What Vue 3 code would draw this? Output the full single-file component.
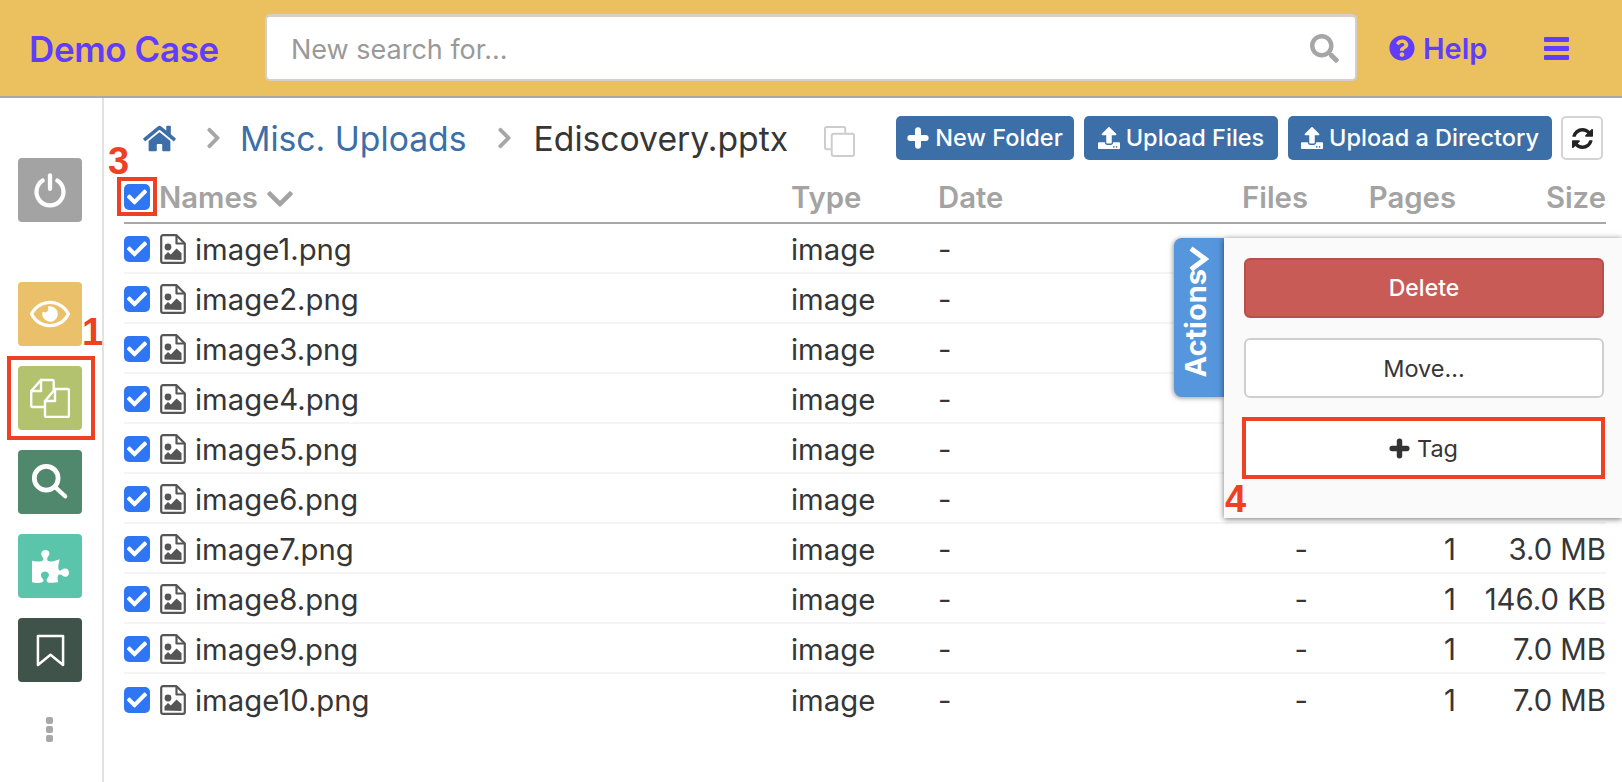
<script setup>
const names = ['image1.png','image2.png','image3.png','image4.png','image5.png','image6.png','image7.png','image8.png','image9.png','image10.png']
const sizes = ['', '', '', '', '', '', '3.0 MB', '146.0 KB', '7.0 MB', '7.0 MB']
const rows = names.map((name, i) => ({ name, size: sizes[i], files: sizes[i] ? '-' : '', pages: sizes[i] ? '1' : '' }))
const paths = {
  check: 'M173.898 439.404l-166.4-166.4c-9.997-9.997-9.997-26.206 0-36.204l36.203-36.204c9.997-9.998 26.207-9.998 36.204 0L192 312.69 432.095 72.596c9.997-9.997 26.207-9.997 36.204 0l36.203 36.204c9.997 9.997 9.997 26.206 0 36.204l-294.4 294.401c-9.998 9.997-26.207 9.997-36.204-.001z',
  search: 'M505 442.7L405.3 343c-4.5-4.5-10.6-7-17-7H372c27.6-35.3 44-79.7 44-128C416 93.1 322.9 0 208 0S0 93.1 0 208s93.1 208 208 208c48.3 0 92.7-16.4 128-44v16.3c0 6.4 2.5 12.5 7 17l99.7 99.7c9.4 9.4 24.6 9.4 33.9 0l28.3-28.3c9.4-9.4 9.4-24.6.1-34zM208 336c-70.7 0-128-57.2-128-128 0-70.7 57.2-128 128-128 70.7 0 128 57.2 128 128 0 70.7-57.2 128-128 128z',
  help: 'M504 256c0 136.997-111.043 248-248 248S8 392.997 8 256C8 119.083 119.043 8 256 8s248 111.083 248 248zM262.655 90c-54.497 0-89.255 22.957-116.549 63.758-3.536 5.286-2.353 12.415 2.715 16.258l34.699 26.31c5.205 3.947 12.621 3.008 16.665-2.122 17.864-22.658 30.113-35.797 57.303-35.797 20.429 0 45.698 13.148 45.698 32.958 0 14.976-12.363 22.667-32.534 33.976C247.128 238.528 216 254.941 216 296v4c0 6.627 5.373 12 12 12h56c6.627 0 12-5.373 12-12v-1.333c0-28.462 83.186-29.647 83.186-106.667 0-58.002-60.165-102-116.531-102zM256 338c-25.365 0-46 20.635-46 46 0 25.364 20.635 46 46 46s46-20.636 46-46c0-25.365-20.635-46-46-46z',
  home: 'M280.37 148.26L96 300.11V464a16 16 0 0 0 16 16l112.06-.29a16 16 0 0 0 15.92-16V368a16 16 0 0 1 16-16h64a16 16 0 0 1 16 16v95.64a16 16 0 0 0 16 16.05L464 480a16 16 0 0 0 16-16V300L295.67 148.26a12.19 12.19 0 0 0-15.3 0zM571.6 251.47L488 182.56V44.05a12 12 0 0 0-12-12h-56a12 12 0 0 0-12 12v72.61L318.47 43a48 48 0 0 0-61 0L4.34 251.47a12 12 0 0 0-1.6 16.9l25.5 31A12 12 0 0 0 45.15 301l235.22-193.74a12.19 12.19 0 0 1 15.3 0L530.9 301a12 12 0 0 0 16.9-1.6l25.5-31a12 12 0 0 0-1.7-16.93z',
  upload: 'M296 384h-80c-13.3 0-24-10.7-24-24V192h-87.7c-17.8 0-26.7-21.5-14.1-34.1L242.3 5.7c7.5-7.5 19.8-7.5 27.3 0l152.2 152.2c12.6 12.6 3.7 34.1-14.1 34.1H320v168c0 13.3-10.7 24-24 24zm216-8v112c0 13.3-10.7 24-24 24H24c-13.3 0-24-10.7-24-24V376c0-13.3 10.7-24 24-24h136v8c0 30.9 25.1 56 56 56h80c30.9 0 56-25.1 56-56v-8h136c13.3 0 24 10.7 24 24zm-124 88c0-11-9-20-20-20s-20 9-20 20 9 20 20 20 20-9 20-20zm64 0c0-11-9-20-20-20s-20 9-20 20 9 20 20 20 20-9 20-20z',
  refresh: 'M1511 928q0 5-1 7-64 268-268 434.5t-478 166.5q-146 0-282.5-55t-243.5-157l-129 129q-19 19-45 19t-45-19-19-45v-448q0-26 19-45t45-19h448q26 0 45 19t19 45-19 45l-137 137q71 66 161 102t187 36q134 0 250-65t186-179q11-17 53-117 8-23 30-23h192q13 0 22.5 9.5t9.5 22.5zm25-800v448q0 26-19 45t-45 19h-448q-26 0-45-19t-19-45 19-45l138-138q-148-137-349-137-134 0-250 65t-186 179q-11 17-53 117-8 23-30 23h-199q-13 0-22.5-9.5t-9.5-22.5v-7q65-268 270-434.5t480-166.5q146 0 284 55.5t245 156.5l130-129q19-19 45-19t45 19 19 45z',
  eye: 'M288 144a110.94 110.94 0 0 0-31.24 5 55.4 55.4 0 0 1 7.24 27 56 56 0 0 1-56 56 55.4 55.4 0 0 1-27-7.24A111.71 111.71 0 1 0 288 144zm284.52 97.4C518.29 135.59 410.93 64 288 64S57.68 135.64 3.48 241.41a32.35 32.35 0 0 0 0 29.19C57.71 376.41 165.07 448 288 448s230.32-71.64 284.52-177.41a32.35 32.35 0 0 0 0-29.19zM288 400c-98.65 0-189.09-55-237.93-144C98.91 167 189.34 112 288 112s189.09 55 237.93 144C477.1 345 386.66 400 288 400z',
  chevronDown: 'M207.029 381.476L12.686 187.132c-9.373-9.373-9.373-24.569 0-33.941l22.667-22.667c9.357-9.357 24.522-9.375 33.901-.04L224 284.505l154.745-154.021c9.379-9.335 24.544-9.317 33.901.04l22.667 22.667c9.373 9.373 9.373 24.569 0 33.941L240.971 381.476c-9.373 9.372-24.569 9.372-33.942 0z',
  chevronRight: 'M285.476 272.971L91.132 467.314c-9.373 9.373-24.569 9.373-33.941 0l-22.667-22.667c-9.357-9.357-9.375-24.522-.04-33.901L188.505 256 34.484 101.255c-9.335-9.379-9.317-24.544.04-33.901l22.667-22.667c9.373-9.373 24.569-9.373 33.941 0L285.475 239.03c9.373 9.372 9.373 24.568.001 33.941z',
  puzzle: 'M519.442 288.651c-41.519 0-59.5 31.593-82.058 31.593C377.409 320.244 432 144 432 144s-196.288 80-196.288-3.297c0-35.827 36.288-46.25 36.288-85.985C272 19.216 243.885 0 210.539 0c-34.654 0-66.366 18.891-66.366 56.346 0 41.364 31.711 59.277 31.711 81.75C175.885 207.719 0 166.758 0 166.758v333.237s178.635 41.047 178.635-28.662c0-22.473-40-40.107-40-81.471 0-37.456 29.25-56.346 63.577-56.346 33.673 0 61.788 19.216 61.788 54.717 0 39.735-36.288 50.158-36.288 85.985 0 60.803 129.675 25.73 181.23 25.73 0 0-34.725-120.101 25.827-120.101 35.962 0 46.423 36.152 86.308 36.152C556.712 416 576 387.99 576 354.443c0-34.199-18.962-65.792-56.558-65.792z'
}
</script>

<template>
  <div class="app">
    <header class="topbar">
      <div class="brand">Demo Case</div>
      <div class="search">
        <span class="placeholder">New search for...</span>
        <svg class="search-icon" viewBox="0 0 512 512"><path :d="paths.search" /></svg>
      </div>
      <div class="help">
        <svg class="help-icon" viewBox="0 0 512 512"><path :d="paths.help" /></svg>
        <span>Help</span>
      </div>
      <div class="bars"><i></i><i></i><i></i></div>
    </header>

    <div class="body">
      <aside class="sidebar">
        <div class="tile power">
          <svg viewBox="0 0 32 32" width="36" height="36" fill="none" stroke="#fff" stroke-width="3.8" stroke-linecap="round">
            <path d="M16 3v12" />
            <path d="M9.5 7.6a12 12 0 1 0 13 0" />
          </svg>
        </div>
        <div class="tile eye">
          <svg viewBox="0 0 576 512" width="40" height="36"><path :d="paths.eye" fill="#fff" /></svg>
        </div>
        <div class="tile files">
          <svg viewBox="0 0 40 40" width="40" height="40" fill="none" stroke="#fff" stroke-width="2.4" stroke-linejoin="round" stroke-linecap="round">
            <path d="M11 2H22.500a1.200 1.200 0 0 1 1.200 1.200V11" />
            <path d="M11 2L1.200 13V27.800A1.200 1.200 0 0 0 2.400 29H14" />
            <path d="M11 2v11H1.200" />
            <path d="M25 11h12.800a1.200 1.200 0 0 1 1.200 1.200v25.600a1.200 1.200 0 0 1-1.200 1.200H16.200a1.200 1.200 0 0 1-1.200-1.200V23z" />
            <path d="M25 11v12H15" />
          </svg>
        </div>
        <div class="tile find">
          <svg viewBox="0 0 40 40" width="38" height="38" fill="none" stroke="#fff" stroke-linecap="round">
            <circle cx="16" cy="16" r="12.500" stroke-width="5" />
            <path d="M26 26l10 9" stroke-width="4.500" />
          </svg>
        </div>
        <div class="tile puzzle">
          <svg viewBox="0 0 576 512" width="37" height="33"><path :d="paths.puzzle" fill="#fff" /></svg>
        </div>
        <div class="tile bookmark">
          <svg viewBox="0 0 30 34" width="29" height="33" fill="none" stroke="#fff" stroke-width="2.600" stroke-linejoin="round">
            <path d="M2 2h26v30L15 21.500 2 32z" />
          </svg>
        </div>
        <div class="dots"><i></i><i></i><i></i></div>
      </aside>

      <main class="main">
        <div class="toolbar">
          <nav class="crumbs">
            <svg class="home" viewBox="0 0 576 512"><path :d="paths.home" /></svg>
            <svg class="crumb-sep" viewBox="0 0 320 512"><path :d="paths.chevronRight" /></svg>
            <a class="crumb-link">Misc. Uploads</a>
            <svg class="crumb-sep" viewBox="0 0 320 512"><path :d="paths.chevronRight" /></svg>
            <span class="crumb-current">Ediscovery.pptx</span>
            <svg class="copy" viewBox="0 0 32 32" fill="none" stroke="#ccc" stroke-width="2">
              <path d="M7 24H3a2 2 0 0 1-2-2V3a2 2 0 0 1 2-2h17a2 2 0 0 1 2 2v4" />
              <rect x="8" y="8" width="23" height="23" rx="2" />
            </svg>
          </nav>
          <div class="actions">
            <button class="btn-blue w-folder">
              <svg viewBox="0 0 20 20" class="btn-plus"><path d="M10 3v14M3 10h14" /></svg><span>New Folder</span>
            </button>
            <button class="btn-blue w-files">
              <svg viewBox="0 0 512 512" class="btn-icon"><path :d="paths.upload" /></svg><span>Upload Files</span>
            </button>
            <button class="btn-blue w-dir">
              <svg viewBox="0 0 512 512" class="btn-icon"><path :d="paths.upload" /></svg><span>Upload a Directory</span>
            </button>
            <button class="btn-refresh">
              <svg viewBox="0 0 1536 1536"><path :d="paths.refresh" /></svg>
            </button>
          </div>
        </div>

        <div class="table-head grid">
          <div class="name-cell">
            <span class="check"><svg viewBox="0 0 512 512"><path :d="paths.check" /></svg></span>
            <span class="names">Names</span>
            <svg class="names-chev" viewBox="0 0 448 512"><path :d="paths.chevronDown" /></svg>
          </div>
          <div>Type</div>
          <div>Date</div>
          <div class="right">Files</div>
          <div class="right">Pages</div>
          <div class="right">Size</div>
        </div>

        <div v-for="row in rows" :key="row.name" class="row grid">
          <div class="name-cell">
            <span class="check"><svg viewBox="0 0 512 512"><path :d="paths.check" /></svg></span>
            <svg class="file-icon" viewBox="0 0 26 30">
              <path class="file-line" d="M3 1.200h13.500l8.300 8.300V27a1.800 1.800 0 0 1-1.800 1.800H3A1.800 1.800 0 0 1 1.200 27V3A1.800 1.800 0 0 1 3 1.200z" />
              <path class="file-line" d="M16.500 1.200v8.300h8.300" />
              <circle cx="8" cy="13" r="3.400" />
              <path d="M4.500 25.500v-4L8 18l2.800 2.500 5.700-6 5 4.500v7z" />
            </svg>
            <span class="file-name">{{ row.name }}</span>
          </div>
          <div>image</div>
          <div>-</div>
          <div class="right">{{ row.files }}</div>
          <div class="right">{{ row.pages }}</div>
          <div class="right">{{ row.size }}</div>
        </div>
      </main>
    </div>

    <div class="panel-tab">
      <span class="tab-label">Actions</span>
      <svg class="tab-chev" viewBox="0 0 20 26"><path d="M2 2.500l14 10.500-14 10.500" /></svg>
    </div>
    <aside class="panel">
      <button class="p-btn delete">Delete</button>
      <button class="p-btn">Move...</button>
      <button class="p-btn tag">
        <svg viewBox="0 0 20 20" class="tag-plus"><path d="M10 3v14M3 10h14" /></svg>Tag
      </button>
    </aside>

    <div class="mark box-one"></div>
    <div class="mark box-three"></div>
    <span class="digit d1">1</span>
    <span class="digit d3">3</span>
    <span class="digit d4">4</span>
  </div>
</template>

<style>
html, body { margin: 0; background: #fff; }
</style>

<style scoped>
.app {
  position: relative;
  width: 1622px;
  height: 782px;
  overflow: hidden;
  font-family: Inter, "Liberation Sans", sans-serif;
  color: #363636;
  background: #fff;
  display: flex;
  flex-direction: column;
}
.topbar {
  box-sizing: border-box;
  height: 98px;
  flex: none;
  background: #ebc15f;
  border-bottom: 2px solid #a8a8a8;
  display: flex;
  align-items: center;
  padding-left: 29px;
  color: #5f3dfa;
}
.brand { width: 236px; padding-top: 2px; font-size: 35px; font-weight: 600; letter-spacing: -0.4px; }
.search {
  box-sizing: border-box;
  width: 1092px;
  height: 67px;
  margin-bottom: 1px;
  background: #fff;
  border: 2px solid #d4d0c8;
  border-top-width: 3px;
  border-radius: 5px;
  display: flex;
  align-items: center;
  justify-content: space-between;
  padding: 0 16px 0 24px;
}
.placeholder { color: #999; font-size: 27px; padding-top: 2px; }
.search-icon { width: 29px; height: 29px; fill: #a6a6a6; }
.help {
  display: flex;
  align-items: center;
  gap: 8px;
  margin-left: 32px;
  font-size: 29px;
  font-weight: 600;
}
.help-icon { width: 26px; height: 26px; fill: #5f3dfa; }
.bars { margin-left: 57px; width: 25px; display: flex; flex-direction: column; gap: 4px; }
.bars i { display: block; height: 5px; background: #5f3dfa; border-radius: 1px; }

.body { flex: 1; display: flex; min-height: 0; }
.sidebar {
  box-sizing: content-box;
  width: 84px;
  flex: none;
  border-right: 2px solid #e2e2e2;
  padding: 60px 0 0 18px;
  display: flex;
  flex-direction: column;
}
.tile {
  width: 64px;
  height: 64px;
  border-radius: 4px;
  display: flex;
  align-items: center;
  justify-content: center;
  margin-bottom: 20px;
}
.power { background: #a3a3a3; margin-bottom: 60px; }
.eye { background: #ebc06b; }
.files { background: #b3c26f; }
.find { background: #50886e; }
.puzzle { background: #5ac5ab; }
.bookmark { background: #40534a; margin-bottom: 35px; }
.dots { width: 64px; display: flex; flex-direction: column; align-items: center; gap: 2px; margin-left: -1px; }
.dots i { width: 7px; height: 7px; border-radius: 2px; background: #a8a8a8; }

.main { flex: 1; padding: 18px 16px 0 20px; min-width: 0; }
.toolbar { height: 44px; display: flex; align-items: center; justify-content: space-between; padding-right: 3px; }
.crumbs { display: flex; align-items: center; margin-left: 19px; height: 44px; }
.home { width: 33px; height: 29px; fill: #3c6ea8; }
.crumb-sep { width: 15px; height: 24px; fill: #a6a6a6; margin: 0 19px 0 30px; }
.crumb-link + .crumb-sep { margin-right: 22px; }
.crumb-link { color: #3c6ea8; font-size: 33.7px; }
.crumb-current { color: #363636; font-size: 33.7px; }
.copy { width: 31px; height: 31px; margin: 6px 0 0 36px; }
.actions { display: flex; align-items: stretch; gap: 10px; height: 44px; }
.btn-blue {
  height: 44px;
  border: none;
  border-radius: 5px;
  background: #3c6ea8;
  color: #fff;
  font: 500 23.5px Inter, "Liberation Sans", sans-serif;
  display: flex;
  align-items: center;
  justify-content: center;
  gap: 6px;
  padding: 0;
}
.btn-blue span { margin-top: -2px; }
.w-folder { width: 178px; }
.w-files { width: 194px; }
.w-dir { width: 264px; }
.btn-icon { width: 22px; height: 22px; fill: #fff; }
.btn-plus { width: 22px; height: 22px; fill: none; stroke: #fff; stroke-width: 5.4; stroke-linecap: round; }
.btn-refresh {
  box-sizing: border-box;
  width: 42px;
  height: 44px;
  margin-left: -1px;
  background: #fff;
  border: 2px solid #d4d4d4;
  border-radius: 5px;
  padding: 0;
  display: flex;
  align-items: center;
  justify-content: center;
}
.btn-refresh svg { width: 21px; height: 21px; fill: #222; }

.grid {
  display: grid;
  grid-template-columns: 667px 147px 220px 150px 148px 150px;
  align-items: center;
}
.right { text-align: right; }
.table-head {
  box-sizing: border-box;
  height: 64px;
  padding: 12px 0 0;
  border-bottom: 2px solid #a8a8a8;
  color: #a3a3a3;
  font-size: 29.3px;
  font-weight: 600;
}
.name-cell { display: flex; align-items: center; }
.check {
  width: 26px;
  height: 26px;
  flex: none;
  border-radius: 5px;
  background: #2f76f5;
  display: flex;
  align-items: center;
  justify-content: center;
}
.check svg { width: 20px; height: 20px; fill: #fff; }
.names { margin-left: 9px; }
.names-chev { width: 28px; height: 30px; margin: 3px 0 0 8px; fill: #a3a3a3; }
.row {
  box-sizing: border-box;
  height: 50px;
  padding-top: 3px;
  border-bottom: 2px solid #f5f5f5;
  font-size: 29.3px;
}
.row .check, .row .file-icon { margin-top: -2px; }
.row:last-child { border-bottom: none; }
.file-icon { width: 26px; height: 30px; margin-left: 10px; flex: none; fill: #555; }
.file-line { fill: none; stroke: #555; stroke-width: 2.2; stroke-linejoin: round; }
.file-name { margin-left: 9px; }

.panel {
  position: absolute;
  left: 1224px;
  top: 238px;
  width: 398px;
  height: 280px;
  box-sizing: border-box;
  background: #fafafa;
  box-shadow: 0 1px 6px rgba(0,0,0,.55);
  padding: 20px 18px 0 20px;
  display: flex;
  flex-direction: column;
  gap: 20px;
}
.panel-tab {
  position: absolute;
  left: 1174px;
  top: 238px;
  width: 50px;
  height: 159px;
  box-sizing: border-box;
  background: #5596dc;
  border-radius: 8px 0 0 8px;
  box-shadow: -1px 1px 5px rgba(0,0,0,.4);
  display: flex;
  flex-direction: column-reverse;
  align-items: center;
  justify-content: flex-start;
  padding-bottom: 19px;
  color: #fff;
}
.tab-label {
  writing-mode: vertical-rl;
  transform: rotate(180deg);
  font-size: 29px;
  font-weight: 700;
  line-height: 1;
  margin-left: -7px;
}
.tab-chev { width: 20px; height: 26px; fill: none; stroke: #fff; stroke-width: 5; margin-bottom: -3px; }
.p-btn {
  box-sizing: border-box;
  width: 360px;
  height: 60px;
  background: #fff;
  border: 2px solid #cfcfcf;
  border-radius: 6px;
  color: #363636;
  font: 400 23.5px Inter, "Liberation Sans", sans-serif;
  display: flex;
  align-items: center;
  justify-content: center;
}
.delete { background: #c85b55; border-color: #b94f49; color: #fff; font-size: 23px; font-weight: 500; }
.tag {
  height: 62px;
  width: 363px;
  margin: -1px 0 0 -2px;
  border: 4px solid #ee4023;
  border-radius: 0;
  gap: 7px;
}
.tag-plus { width: 21px; height: 21px; fill: none; stroke: #333; stroke-width: 5.2; stroke-linecap: round; }

.mark { position: absolute; box-sizing: border-box; border: 4px solid #ee4023; }
.box-one { left: 7px; top: 356px; width: 88px; height: 84px; }
.box-three { left: 117px; top: 177px; width: 40px; height: 39px; }
.digit {
  position: absolute;
  color: #ee4023;
  font-family: "Liberation Sans", sans-serif;
  font-weight: 700;
  font-size: 38px;
  line-height: 1;
}
.d1 { left: 82px; top: 313px; }
.d3 { left: 108px; top: 142px; }
.d4 { left: 1225px; top: 480px; }
</style>
